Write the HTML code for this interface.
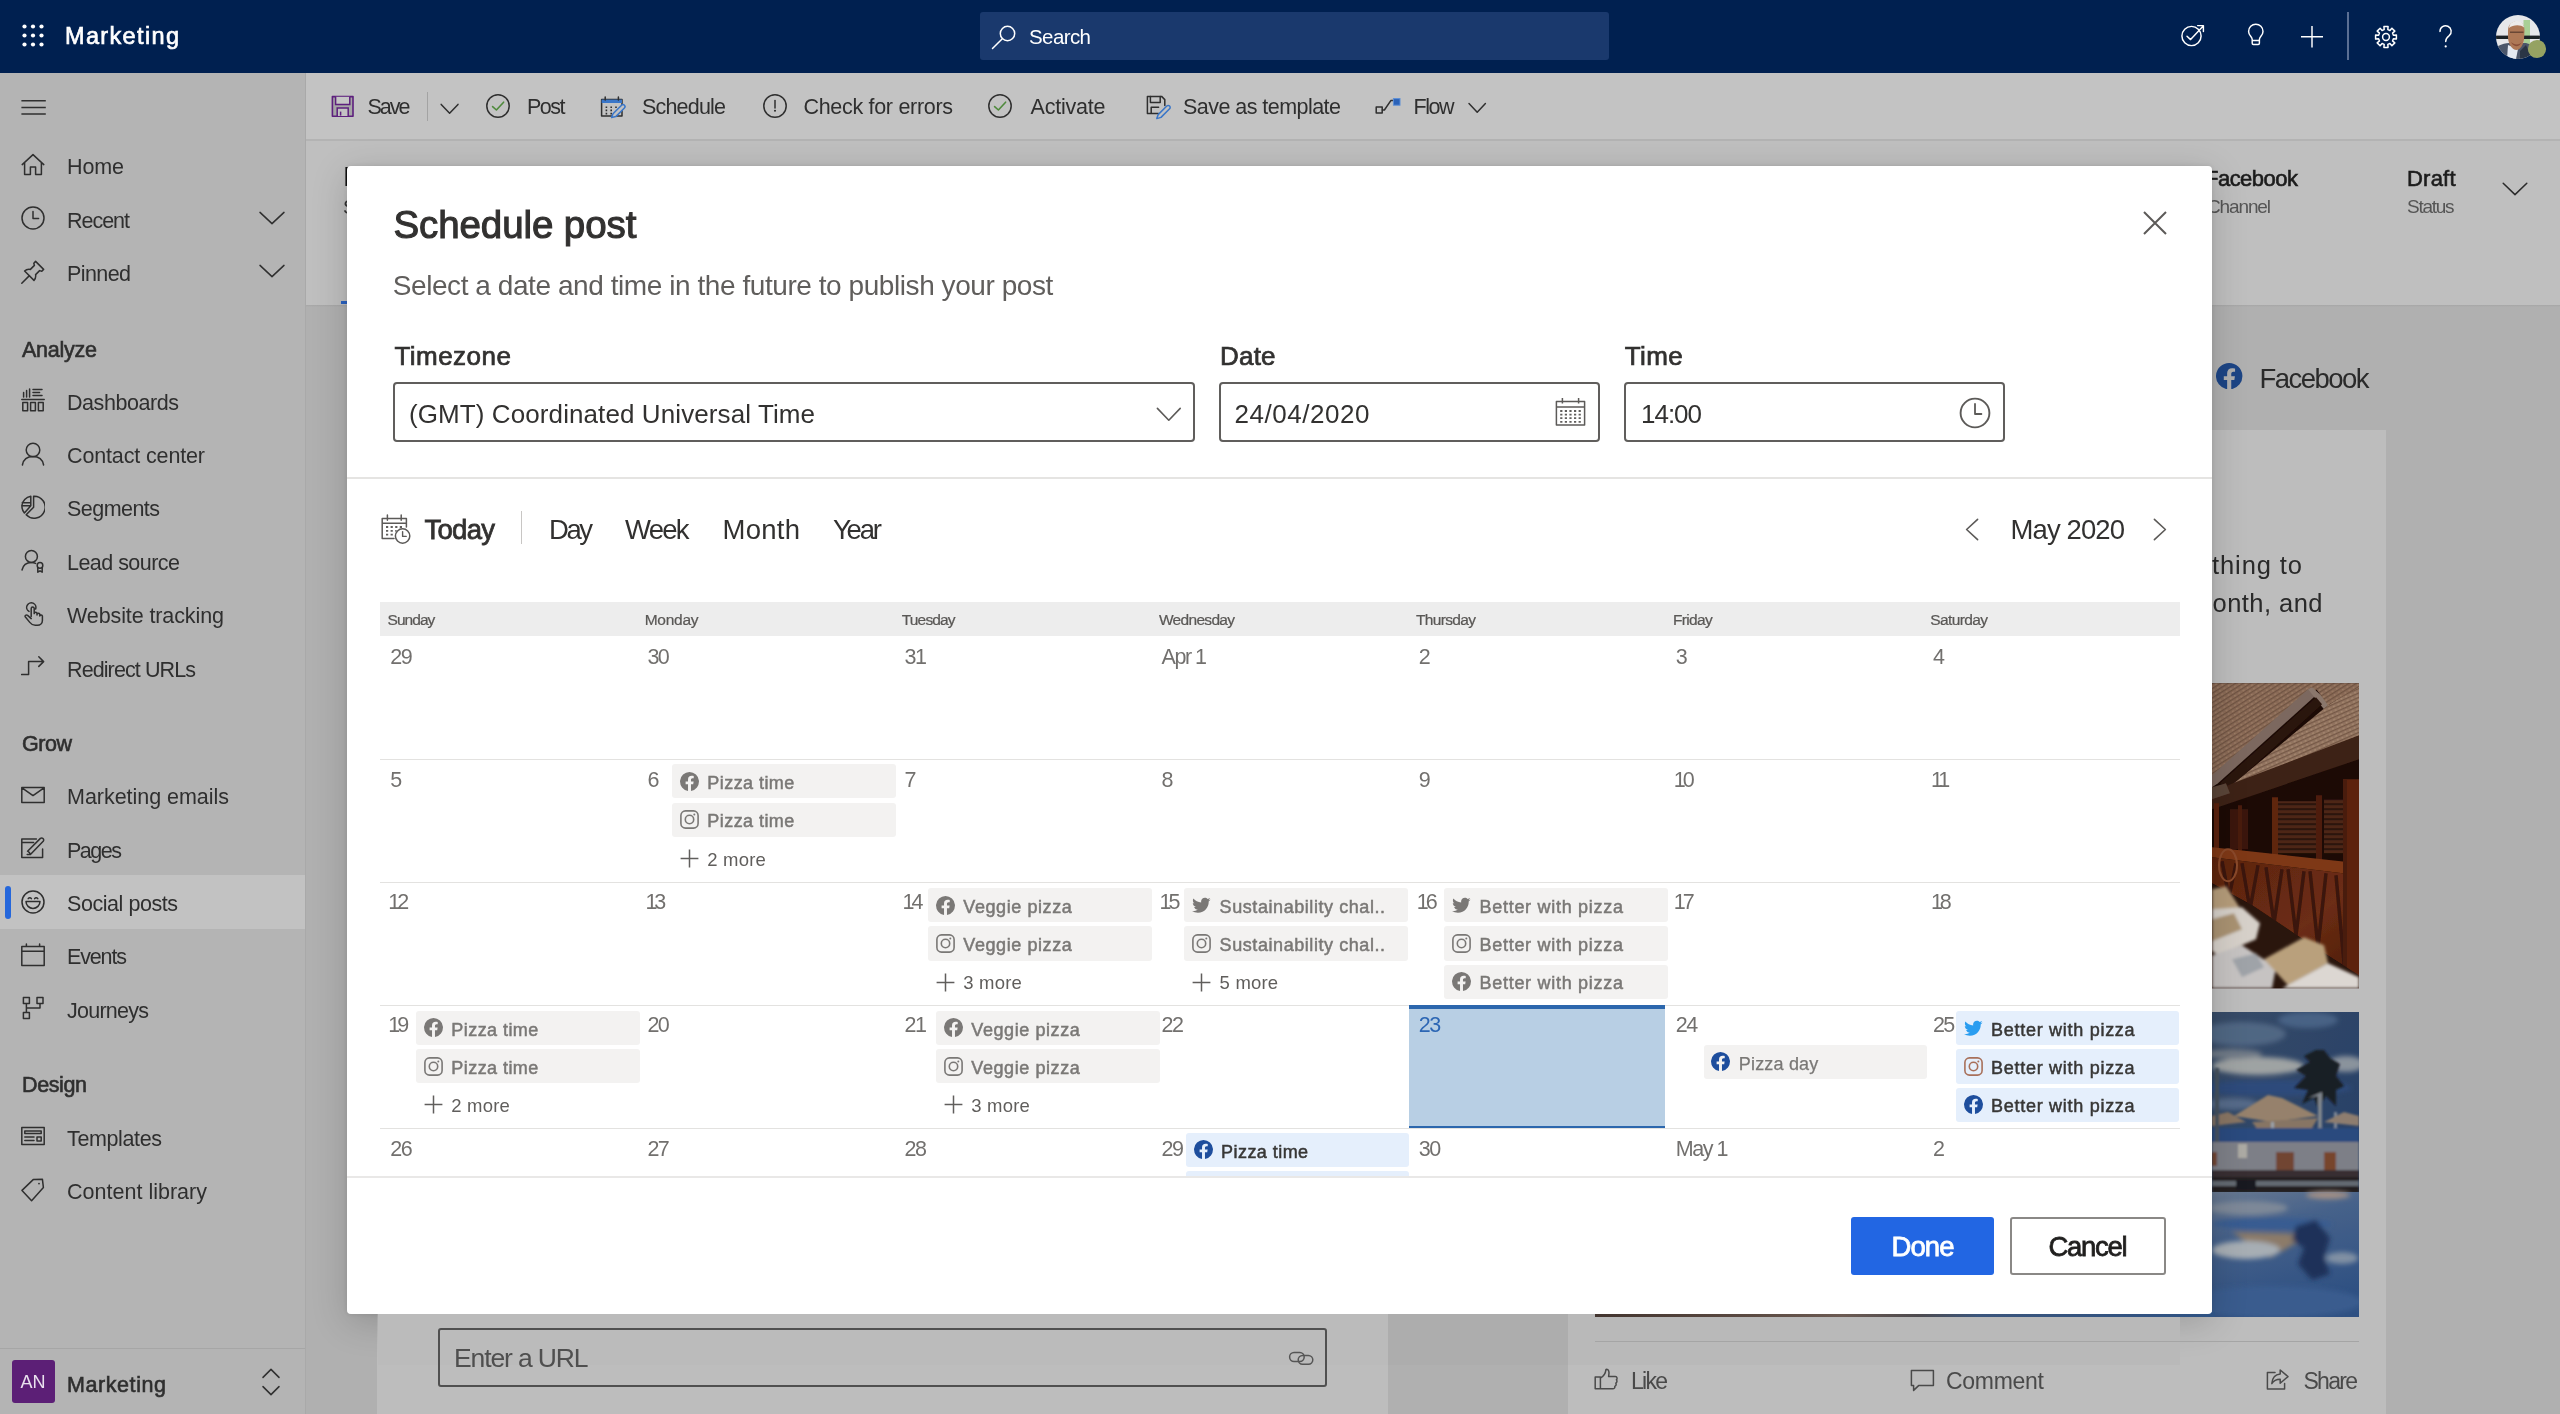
<!DOCTYPE html>
<html lang="en"><head><meta charset="utf-8"><title>Schedule post - Marketing</title>
<style>
html,body{margin:0;padding:0;}
body{width:2560px;height:1414px;overflow:hidden;position:relative;background:#b1b1b1;font-family:"Liberation Sans",sans-serif;}
#app{position:absolute;left:0;top:0;width:2560px;height:1414px;will-change:transform;}
.r{position:absolute;display:block;}
.t{position:absolute;white-space:nowrap;}
</style></head><body>
<div id="app">
<div class="r" style="left:0px;top:0px;width:2560px;height:73px;background:#002050;"></div>
<div class="r" style="left:0px;top:73px;width:305px;height:1341px;background:#b4b4b4;"></div>
<div class="r" style="left:305px;top:73px;width:1px;height:1341px;background:#a9a9a9;"></div>
<div class="r" style="left:306px;top:73px;width:2254px;height:66px;background:#c3c3c3;"></div>
<div class="r" style="left:306px;top:139px;width:2254px;height:2px;background:#b3b3b3;"></div>
<div class="r" style="left:306px;top:141px;width:2254px;height:164px;background:#bfbfbf;"></div>
<div class="r" style="left:306px;top:305px;width:2254px;height:1109px;background:#b0b0b0;"></div>
<div class="r" style="left:377px;top:305px;width:1011px;height:1109px;background:#bdbdbd;"></div>
<div class="r" style="left:1568px;top:430px;width:818px;height:984px;background:#bdbdbd;"></div>
<div class="r" style="left:0px;top:1348px;width:305px;height:1px;background:#a6a6a6;"></div>
<svg class="r" style="left:21.5px;top:23.5px;" width="22" height="24" viewBox="0 0 22 24" fill="none"><circle cx="2.5" cy="2.5" r="2.1" fill="#fff"/><circle cx="2.5" cy="11.5" r="2.1" fill="#fff"/><circle cx="2.5" cy="20.5" r="2.1" fill="#fff"/><circle cx="11" cy="2.5" r="2.1" fill="#fff"/><circle cx="11" cy="11.5" r="2.1" fill="#fff"/><circle cx="11" cy="20.5" r="2.1" fill="#fff"/><circle cx="19.5" cy="2.5" r="2.1" fill="#fff"/><circle cx="19.5" cy="11.5" r="2.1" fill="#fff"/><circle cx="19.5" cy="20.5" r="2.1" fill="#fff"/></svg>
<div class="t" style="left:65.00px;top:20px;font-size:23.5px;line-height:32px;-webkit-text-stroke:0.66px #fff;letter-spacing:1.351px;color:#fff;">Marketing</div>
<div class="r" style="left:980px;top:12px;width:629px;height:48px;background:#1a396d;border-radius:3px;"></div>
<svg class="r" style="left:990px;top:22px;" width="30" height="30" viewBox="0 0 30 30" fill="none"><circle cx="17.5" cy="11.5" r="7.2" stroke="#fff" stroke-width="1.5"/><path d="M12.3 16.7 L2.5 26.5" stroke="#fff" stroke-width="1.5" stroke-linecap="round"/></svg>
<div class="t" style="left:1029.00px;top:22px;font-size:20.5px;line-height:29px;letter-spacing:-0.589px;color:#fff;">Search</div>
<svg class="r" style="left:2180px;top:22px;" width="26" height="26" viewBox="0 0 26 26" fill="none"><circle cx="11.5" cy="14" r="9.6" stroke="#fff" stroke-width="1.45"/><path d="M7 14.2 L10.6 17.6 L23 4.2 M17.6 3.6 H23.4 V9.4" stroke="#fff" stroke-width="1.45" stroke-linecap="round" stroke-linejoin="round"/></svg>
<svg class="r" style="left:2245px;top:23px;" width="22" height="24" viewBox="0 0 22 24" fill="none"><path d="M7.2 16.4 C7.2 13.8 3.6 12.4 3.6 8.4 A7.2 7.2 0 0 1 18 8.4 C18 12.4 14.4 13.8 14.4 16.4 V20.2 A1.2 1.2 0 0 1 13.2 21.4 H8.4 A1.2 1.2 0 0 1 7.2 20.2 Z M7.2 17.4 H14.4" stroke="#fff" stroke-width="1.45" stroke-linejoin="round"/></svg>
<svg class="r" style="left:2300px;top:25px;" width="24" height="24" viewBox="0 0 24 24" fill="none"><path d="M12 1 V22.5 M1 11.7 H23" stroke="#fff" stroke-width="1.45"/></svg>
<div class="r" style="left:2347px;top:12px;width:1.5px;height:48px;background:#5a6f94;"></div>
<svg class="r" style="left:2374px;top:24.5px;" width="24" height="24" viewBox="0 0 24 24" fill="none"><path d="M9.93 1.60 L14.07 1.60 L13.83 4.62 L15.92 5.49 L17.89 3.19 L20.81 6.11 L18.51 8.08 L19.38 10.17 L22.40 9.93 L22.40 14.07 L19.38 13.83 L18.51 15.92 L20.81 17.89 L17.89 20.81 L15.92 18.51 L13.83 19.38 L14.07 22.40 L9.93 22.40 L10.17 19.38 L8.08 18.51 L6.11 20.81 L3.19 17.89 L5.49 15.92 L4.62 13.83 L1.60 14.07 L1.60 9.93 L4.62 10.17 L5.49 8.08 L3.19 6.11 L6.11 3.19 L8.08 5.49 L10.17 4.62 Z" stroke="#fff" stroke-width="1.5" stroke-linejoin="round"/><circle cx="12" cy="12" r="3.4" stroke="#fff" stroke-width="1.5"/></svg>
<svg class="r" style="left:2437px;top:24px;" width="18" height="26" viewBox="0 0 18 26" fill="none"><path d="M3 7.4 A5.6 5.6 0 1 1 12.2 11.6 C10.2 13.2 8.7 14.2 8.7 17.6" stroke="#fff" stroke-width="1.45" stroke-linecap="round"/><circle cx="8.7" cy="22.4" r="1.1" fill="#fff"/></svg>
<svg class="r" style="left:2496.3px;top:15.4px;" width="44" height="44" viewBox="0 0 44 44" fill="none"><defs><clipPath id="avc"><circle cx="22" cy="22" r="22"/></clipPath><filter id="avb" x="-10%" y="-10%" width="120%" height="120%"><feGaussianBlur stdDeviation="0.7"/></filter></defs>
<g clip-path="url(#avc)"><rect width="44" height="44" fill="#e6e7ea"/>
<g filter="url(#avb)">
<rect x="27.5" y="5" width="6.5" height="32" fill="#a9cf96"/>
<rect x="0" y="20.6" width="44" height="3.4" fill="#1d2026"/>
<path d="M0 44 L2 31 C6 29 10 28 13 28 L30 28 C34 29 38 31 40 34 L44 44 Z" fill="#4c566a"/>
<path d="M11 44 L12 30 L22 34 L20 44 Z" fill="#e4e9f1"/>
<path d="M24 36 L30 30 L36 44 L24 44 Z" fill="#2c3444"/>
<path d="M12 16 C12 9 16 6.5 21 6.5 C26 6.5 28.5 10 28.5 16 L28 24 C27.5 30 24 35 20.5 35 C16 35 12.5 29 12 23 Z" fill="#ae7857"/>
<path d="M13 13 C13.5 8 17 6 21 6 C25 6 27.5 8.5 28 12.5 C25 9.5 17 9.5 13 13 Z" fill="#ecebea"/>
<path d="M15 27 C17 32 23 33 26 27 C24 30 18 30.5 15 27 Z" fill="#8a4f38"/>
<path d="M14 17.2 H27.5" stroke="#5a3a2c" stroke-width="1.2"/>
</g></g></svg>
<svg class="r" style="left:2527.4px;top:38.8px;" width="20" height="20" viewBox="0 0 20 20" fill="none"><circle cx="10" cy="10" r="9.1" fill="#95a262"/></svg>
<svg class="r" style="left:21px;top:97px;" width="26" height="20" viewBox="0 0 26 20" fill="none"><path d="M0.4 3.75 H24.8 M0.4 10.45 H24.8 M0.4 17.1 H24.8" stroke="#2f2f2f" stroke-width="1.5"/></svg>
<div class="r" style="left:0px;top:875px;width:305px;height:54px;background:#c2c2c2;"></div>
<div class="r" style="left:4.5px;top:885.5px;width:6.5px;height:33px;background:#2567db;border-radius:3.5px;"></div>
<div class="t" style="left:67.00px;top:152px;font-size:21.5px;line-height:30px;letter-spacing:-0.121px;color:#2f2f2f;">Home</div>
<svg class="r" style="left:21px;top:152.9px;" width="24" height="24" viewBox="0 0 24 24" fill="none"><path d="M1.2 11.6 L12 1.6 L22.8 11.6 M3.6 9.6 V21.6 H9.4 V14 H14.6 V21.6 H20.4 V9.6" stroke="#2f2f2f" stroke-width="1.5" stroke-linecap="round" stroke-linejoin="round"/></svg>
<div class="t" style="left:67.00px;top:206px;font-size:21.5px;line-height:30px;letter-spacing:-1.022px;color:#2f2f2f;">Recent</div>
<svg class="r" style="left:21px;top:206.3px;" width="24" height="24" viewBox="0 0 24 24" fill="none"><circle cx="12" cy="12" r="11" stroke="#2f2f2f" stroke-width="1.5" stroke-linecap="round" stroke-linejoin="round"/><path d="M12 5.6 V12.6 H17.6" stroke="#2f2f2f" stroke-width="1.5" stroke-linecap="round" stroke-linejoin="round"/></svg>
<div class="t" style="left:67.00px;top:259px;font-size:21.5px;line-height:30px;letter-spacing:-0.590px;color:#2f2f2f;">Pinned</div>
<svg class="r" style="left:21px;top:259.7px;" width="24" height="24" viewBox="0 0 24 24" fill="none"><path d="M0.8 23.2 L8.4 15.6 M14.6 1.4 L22.6 9.4 L20.8 11.2 L18.6 10.6 L14.6 14.6 C15 17 14.4 19 13 20.4 L3.6 11 C5 9.6 7 9 9.4 9.4 L13.4 5.4 L12.8 3.2 Z" stroke="#2f2f2f" stroke-width="1.5" stroke-linecap="round" stroke-linejoin="round"/></svg>
<div class="t" style="left:67.00px;top:388px;font-size:21.5px;line-height:30px;letter-spacing:-0.436px;color:#2f2f2f;">Dashboards</div>
<svg class="r" style="left:21px;top:388.4px;" width="24" height="24" viewBox="0 0 24 24" fill="none"><path d="M2.6 9 V4.6 M5.6 9 V2.6 M8.6 9 V1 M12 1.6 H21 M12 4.6 H18.6 M12 7.6 H21 M0.8 11.4 H23.2 M1.8 14.4 H6.6 V22.8 H1.8 Z M9.6 14.4 H14.4 V22.8 H9.6 Z M17.4 14.4 H22.2 V22.8 H17.4 Z" stroke="#2f2f2f" stroke-width="1.5" stroke-linecap="round" stroke-linejoin="round"/></svg>
<div class="t" style="left:67.00px;top:441px;font-size:21.5px;line-height:30px;letter-spacing:-0.140px;color:#2f2f2f;">Contact center</div>
<svg class="r" style="left:21px;top:441.7px;" width="24" height="24" viewBox="0 0 24 24" fill="none"><circle cx="12" cy="8" r="6.8" stroke="#2f2f2f" stroke-width="1.5" stroke-linecap="round" stroke-linejoin="round"/><path d="M1.4 23 C2.4 17.6 6.4 14.6 12 14.6 C17.6 14.6 21.6 17.6 22.6 23" stroke="#2f2f2f" stroke-width="1.5" stroke-linecap="round" stroke-linejoin="round"/></svg>
<div class="t" style="left:67.00px;top:494px;font-size:21.5px;line-height:30px;letter-spacing:-0.542px;color:#2f2f2f;">Segments</div>
<svg class="r" style="left:21px;top:495.2px;" width="24" height="24" viewBox="0 0 24 24" fill="none"><path d="M9.8 1.2 A11 11 0 0 0 0.8 10.8 H9.8 Z M0.9 10.8 A10.8 10.8 0 0 0 3.4 18 L9.8 10.8 M12.6 1.2 A11 11 0 1 1 5.2 19.8 L12.6 12.2 Z M1.2 7.8 H9.6" stroke="#2f2f2f" stroke-width="1.5" stroke-linecap="round" stroke-linejoin="round"/></svg>
<div class="t" style="left:67.00px;top:548px;font-size:21.5px;line-height:30px;letter-spacing:-0.534px;color:#2f2f2f;">Lead source</div>
<svg class="r" style="left:21px;top:548.7px;" width="24" height="24" viewBox="0 0 24 24" fill="none"><circle cx="10.4" cy="7.4" r="6" stroke="#2f2f2f" stroke-width="1.5" stroke-linecap="round" stroke-linejoin="round"/><path d="M1 21 C2 16.4 5.6 13.4 10.4 13.4 C12 13.4 13.4 13.8 14.6 14.4" stroke="#2f2f2f" stroke-width="1.5" stroke-linecap="round" stroke-linejoin="round"/><circle cx="19" cy="16.4" r="2.8" stroke="#2f2f2f" stroke-width="1.5" stroke-linecap="round" stroke-linejoin="round"/><path d="M16.8 18.6 V23.2 L19 21.8 L21.2 23.2 V18.6" stroke="#2f2f2f" stroke-width="1.5" stroke-linecap="round" stroke-linejoin="round"/></svg>
<div class="t" style="left:67.00px;top:601px;font-size:21.5px;line-height:30px;letter-spacing:-0.103px;color:#2f2f2f;">Website tracking</div>
<svg class="r" style="left:21px;top:602px;" width="24" height="24" viewBox="0 0 24 24" fill="none"><path d="M8 9.4 A4.6 4.6 0 1 1 14.6 7 M10.2 14.6 V6.6 A1.5 1.5 0 0 1 13.2 6.6 V11.4 M13.2 11.6 A1.4 1.4 0 0 1 16 11.8 V13 M16 12.6 A1.4 1.4 0 0 1 18.8 12.8 V14 M18.8 13.8 A1.4 1.4 0 0 1 21.4 14.2 V18.4 C21.4 21.2 19.2 23.2 16.4 23.2 H14.2 C11.8 23.2 10.2 22.2 8.8 20.4 L4.4 15 C3.4 13.6 5.2 12.2 6.6 13.4 L10.2 16.6" stroke="#2f2f2f" stroke-width="1.5" stroke-linecap="round" stroke-linejoin="round"/></svg>
<div class="t" style="left:67.00px;top:655px;font-size:21.5px;line-height:30px;letter-spacing:-0.899px;color:#2f2f2f;">Redirect URLs</div>
<svg class="r" style="left:21px;top:655.4px;" width="24" height="24" viewBox="0 0 24 24" fill="none"><path d="M0.6 19.6 H7.6 V6.6 H22.6 M17.8 1.8 L22.6 6.6 L17.8 11.4" stroke="#2f2f2f" stroke-width="1.5" stroke-linecap="round" stroke-linejoin="round"/></svg>
<div class="t" style="left:67.00px;top:782px;font-size:21.5px;line-height:30px;letter-spacing:-0.033px;color:#2f2f2f;">Marketing emails</div>
<svg class="r" style="left:21px;top:782.7px;" width="24" height="24" viewBox="0 0 24 24" fill="none"><path d="M0.8 4.4 H23.2 V19.6 H0.8 Z M1 4.8 L12 12.6 L23 4.8" stroke="#2f2f2f" stroke-width="1.5" stroke-linecap="round" stroke-linejoin="round"/></svg>
<div class="t" style="left:67.00px;top:836px;font-size:21.5px;line-height:30px;letter-spacing:-1.488px;color:#2f2f2f;">Pages</div>
<svg class="r" style="left:21px;top:836.2px;" width="24" height="24" viewBox="0 0 24 24" fill="none"><path d="M21.6 13 V21.6 H0.8 V3 H15.4 M0.8 6.6 H12.6 M6.2 18.4 H9.4 L22.2 5.2 A2 2 0 0 0 19.4 2.4 L6.6 15.2 C7.4 15.6 9 17 9.4 18.4" stroke="#2f2f2f" stroke-width="1.5" stroke-linecap="round" stroke-linejoin="round"/></svg>
<div class="t" style="left:67.00px;top:889px;font-size:21.5px;line-height:30px;letter-spacing:-0.448px;color:#2f2f2f;">Social posts</div>
<svg class="r" style="left:21px;top:889.7px;" width="24" height="24" viewBox="0 0 24 24" fill="none"><circle cx="12" cy="12" r="11" stroke="#2f2f2f" stroke-width="1.5" stroke-linecap="round" stroke-linejoin="round"/><path d="M5 11.4 H19 A7 7 0 0 1 5 11.4 Z M7.2 8.6 A2 2 0 0 1 10.4 8.6 M13.6 8.6 A2 2 0 0 1 16.8 8.6" stroke="#2f2f2f" stroke-width="1.5" stroke-linecap="round" stroke-linejoin="round"/></svg>
<div class="t" style="left:67.00px;top:942px;font-size:21.5px;line-height:30px;letter-spacing:-1.145px;color:#2f2f2f;">Events</div>
<svg class="r" style="left:21px;top:943px;" width="24" height="24" viewBox="0 0 24 24" fill="none"><path d="M0.8 3.6 H23.2 V22.4 H0.8 Z M0.8 8.2 H23.2 M5.4 1 V3.6 M18.6 1 V3.6" stroke="#2f2f2f" stroke-width="1.5" stroke-linecap="round" stroke-linejoin="round"/></svg>
<div class="t" style="left:67.00px;top:996px;font-size:21.5px;line-height:30px;letter-spacing:-0.750px;color:#2f2f2f;">Journeys</div>
<svg class="r" style="left:21px;top:996.4px;" width="24" height="24" viewBox="0 0 24 24" fill="none"><path d="M2.4 1.6 H8.4 V7.6 H2.4 Z M16 1.6 H22 V7.6 H16 Z M2.4 16.4 H8.4 V22.4 H2.4 Z M5.4 7.6 V16.4 M19 7.6 V12 H5.4" stroke="#2f2f2f" stroke-width="1.5" stroke-linecap="round" stroke-linejoin="round"/></svg>
<div class="t" style="left:67.00px;top:1124px;font-size:21.5px;line-height:30px;letter-spacing:-0.375px;color:#2f2f2f;">Templates</div>
<svg class="r" style="left:21px;top:1124.2px;" width="24" height="24" viewBox="0 0 24 24" fill="none"><path d="M0.8 3.6 H23.2 V20.4 H0.8 Z M3.8 7 H20.2 V9.6 H3.8 Z M3.8 13 H13 M3.8 16.6 H13 M16 13 H20.2 V17 H16 Z" stroke="#2f2f2f" stroke-width="1.5" stroke-linecap="round" stroke-linejoin="round"/></svg>
<div class="t" style="left:67.00px;top:1177px;font-size:21.5px;line-height:30px;letter-spacing:0.013px;color:#2f2f2f;">Content library</div>
<svg class="r" style="left:21px;top:1177.7px;" width="24" height="24" viewBox="0 0 24 24" fill="none"><path d="M1 12.4 L12.2 1.6 L21.4 1.2 L22.4 9.6 L10.6 22.8 Z" stroke="#2f2f2f" stroke-width="1.5" stroke-linecap="round" stroke-linejoin="round"/><circle cx="18" cy="5.6" r="0.9" fill="#2f2f2f"/></svg>
<div class="t" style="left:22.00px;top:335px;font-size:21.5px;line-height:30px;-webkit-text-stroke:0.60px #2f2f2f;letter-spacing:-0.249px;color:#2f2f2f;">Analyze</div>
<div class="t" style="left:22.00px;top:729px;font-size:21.5px;line-height:30px;-webkit-text-stroke:0.60px #2f2f2f;letter-spacing:-0.476px;color:#2f2f2f;">Grow</div>
<div class="t" style="left:22.00px;top:1070px;font-size:21.5px;line-height:30px;-webkit-text-stroke:0.60px #2f2f2f;letter-spacing:-0.386px;color:#2f2f2f;">Design</div>
<svg class="r" style="left:258px;top:209.5px;" width="28" height="16" viewBox="0 0 28 16" fill="none"><path d="M2 2.4 L14 13.6 L26 2.4" stroke="#2f2f2f" stroke-width="1.5" stroke-linecap="round" stroke-linejoin="round"/></svg>
<svg class="r" style="left:258px;top:262.5px;" width="28" height="16" viewBox="0 0 28 16" fill="none"><path d="M2 2.4 L14 13.6 L26 2.4" stroke="#2f2f2f" stroke-width="1.5" stroke-linecap="round" stroke-linejoin="round"/></svg>
<div class="r" style="left:12px;top:1360px;width:43px;height:43px;background:#5c1f76;border-radius:3px;"></div>
<div class="t" style="left:20.50px;top:1369px;font-size:18px;line-height:26px;letter-spacing:-0.002px;color:#e9e1ee;">AN</div>
<div class="t" style="left:67.00px;top:1370px;font-size:21.5px;line-height:30px;-webkit-text-stroke:0.60px #2f2f2f;letter-spacing:0.574px;color:#2f2f2f;">Marketing</div>
<svg class="r" style="left:260px;top:1366px;" width="22" height="32" viewBox="0 0 22 32" fill="none"><path d="M3 11.4 L11 3.4 L19 11.4 M3 20.6 L11 28.6 L19 20.6" stroke="#2f2f2f" stroke-width="1.5" stroke-linecap="round" stroke-linejoin="round"/></svg>
<svg class="r" style="left:331px;top:95px;" width="24" height="23" viewBox="0 0 24 23" fill="none"><path d="M1.4 1.6 H22 V21.2 H1.4 Z" fill="#a6a6a6" stroke="#5d1f7d" stroke-width="1.6" stroke-linejoin="round"/><path d="M4.6 1.8 V9.6 H18.8 V1.8" fill="#c6c6c6" stroke="#5d1f7d" stroke-width="1.5"/><path d="M6.2 21 V13 H17.2 V21" fill="#c3c3c3" stroke="#5d1f7d" stroke-width="1.5"/><path d="M9.6 20.6 V16.6" stroke="#5d1f7d" stroke-width="1.5"/></svg>
<div class="t" style="left:367.50px;top:92px;font-size:21.5px;line-height:30px;letter-spacing:-2.000px;color:#2f2f2f;">Save</div>
<div class="r" style="left:427px;top:92px;width:1.3px;height:29px;background:#a3a3a3;"></div>
<svg class="r" style="left:439px;top:101.5px;" width="22" height="14" viewBox="0 0 22 14" fill="none"><path d="M2.2 2.4 L10.6 11.2 L19 2.4" stroke="#2f2f2f" stroke-width="1.5" stroke-linecap="round" stroke-linejoin="round"/></svg>
<svg class="r" style="left:484.7px;top:93.2px;" width="26" height="26" viewBox="0 0 26 26" fill="none"><circle cx="13" cy="13" r="11.2" stroke="#2f2f2f" stroke-width="1.5" stroke-linecap="round" stroke-linejoin="round"/><path d="M7.6 13.6 L11.4 17 L18.6 9.2" stroke="#4f8a3c" stroke-width="1.6" stroke-linecap="round" stroke-linejoin="round"/></svg>
<div class="t" style="left:527.00px;top:92px;font-size:21.5px;line-height:30px;letter-spacing:-1.507px;color:#2f2f2f;">Post</div>
<svg class="r" style="left:600px;top:95px;" width="26" height="24" viewBox="0 0 26 24" fill="none"><path d="M1.6 4.6 H22 V21 H1.6 Z" stroke="#2f2f2f" stroke-width="1.5" stroke-linecap="round" stroke-linejoin="round"/><rect x="1.6" y="4.6" width="20.4" height="3.4" fill="#3a76c8"/><path d="M5.2 2 V5 M18.4 2 V5" stroke="#2f2f2f" stroke-width="1.5" stroke-linecap="round" stroke-linejoin="round"/><path d="M5.6 12.2 h1.6 M10.4 12.2 h1.6 M15.2 12.2 h1.6 M5.6 15.4 h1.6 M10.4 15.4 h1.6 M5.6 18.6 h1.6 M10.4 18.6 h1.6" stroke="#2f2f2f" stroke-width="1.6"/><path d="M11.6 22.6 L13 18.8 L21.6 10.2 A1.9 1.9 0 0 1 24.4 13 L15.8 21.6 Z" fill="#c3c3c3" stroke="#3a76c8" stroke-width="1.5" stroke-linejoin="round"/></svg>
<div class="t" style="left:642.00px;top:92px;font-size:21.5px;line-height:30px;letter-spacing:-0.808px;color:#2f2f2f;">Schedule</div>
<svg class="r" style="left:762px;top:93.2px;" width="26" height="26" viewBox="0 0 26 26" fill="none"><circle cx="13" cy="13" r="11.2" stroke="#2f2f2f" stroke-width="1.5" stroke-linecap="round" stroke-linejoin="round"/><path d="M13 7.4 V15" stroke="#2f2f2f" stroke-width="1.5" stroke-linecap="round" stroke-linejoin="round"/><circle cx="13" cy="17.8" r="1.05" fill="#2f2f2f"/></svg>
<div class="t" style="left:803.50px;top:92px;font-size:21.5px;line-height:30px;letter-spacing:-0.309px;color:#2f2f2f;">Check for errors</div>
<svg class="r" style="left:986.6px;top:93.2px;" width="26" height="26" viewBox="0 0 26 26" fill="none"><circle cx="13" cy="13" r="11.2" stroke="#2f2f2f" stroke-width="1.5" stroke-linecap="round" stroke-linejoin="round"/><path d="M7.6 13.6 L11.4 17 L18.6 9.2" stroke="#4f8a3c" stroke-width="1.6" stroke-linecap="round" stroke-linejoin="round"/></svg>
<div class="t" style="left:1030.50px;top:92px;font-size:21.5px;line-height:30px;letter-spacing:-0.211px;color:#2f2f2f;">Activate</div>
<svg class="r" style="left:1146px;top:95px;" width="26" height="25" viewBox="0 0 26 25" fill="none"><path d="M12.4 18.4 H1.4 V1.4 H15.6 L18.8 4.6 V10.6" stroke="#2f2f2f" stroke-width="1.5" stroke-linecap="round" stroke-linejoin="round"/><path d="M4.4 1.6 V7.4 H14.2 V1.6 M5.2 18.2 V12.2 H12.6" stroke="#2f2f2f" stroke-width="1.5" stroke-linecap="round" stroke-linejoin="round"/><path d="M10.8 23.6 L12.2 19.6 L20.8 11 A1.9 1.9 0 0 1 23.6 13.8 L15 22.4 Z" fill="#c3c3c3" stroke="#3a76c8" stroke-width="1.5" stroke-linejoin="round"/></svg>
<div class="t" style="left:1183.00px;top:92px;font-size:21.5px;line-height:30px;letter-spacing:-0.542px;color:#2f2f2f;">Save as template</div>
<svg class="r" style="left:1375px;top:98px;" width="27" height="17" viewBox="0 0 27 17" fill="none"><rect x="1.2" y="9" width="6" height="6" stroke="#2f2f2f" stroke-width="1.5" stroke-linecap="round" stroke-linejoin="round"/><path d="M7.4 12 H9.4 L15.8 2.6 H18" stroke="#2f2f2f" stroke-width="1.5" stroke-linecap="round" stroke-linejoin="round"/><rect x="18.4" y="0.6" width="6.6" height="6.6" fill="#2b62b8" stroke="#5d8fd6" stroke-width="1"/></svg>
<div class="t" style="left:1413.50px;top:92px;font-size:21.5px;line-height:30px;letter-spacing:-1.484px;color:#2f2f2f;">Flow</div>
<svg class="r" style="left:1466.5px;top:100.5px;" width="21" height="14" viewBox="0 0 21 14" fill="none"><path d="M2 2.6 L10.2 11.2 L18.4 2.6" stroke="#2f2f2f" stroke-width="1.5" stroke-linecap="round" stroke-linejoin="round"/></svg>
<div class="r" style="left:306px;top:305px;width:2254px;height:2px;background:linear-gradient(#a6a6a6,#b0b0b0);"></div>
<div class="r" style="left:377px;top:307px;width:1011px;height:1107px;background:#bdbdbd;"></div>
<div class="t" style="left:343.40px;top:157px;font-size:28.5px;line-height:38px;font-weight:700;letter-spacing:-1.100px;color:#111;">New social post</div>
<div class="t" style="left:343.00px;top:193px;font-size:20px;line-height:28px;letter-spacing:-0.584px;color:#333;">Social post</div>
<div class="r" style="left:341px;top:301px;width:60px;height:3px;background:#2b62c0;"></div>
<div class="t" style="left:2205.00px;top:163px;font-size:22px;line-height:31px;-webkit-text-stroke:0.62px #1c1c1c;letter-spacing:-0.524px;color:#1c1c1c;">Facebook</div>
<div class="t" style="left:2207.00px;top:193px;font-size:19px;line-height:27px;letter-spacing:-1.129px;color:#555;">Channel</div>
<div class="t" style="left:2407.00px;top:163px;font-size:22px;line-height:31px;-webkit-text-stroke:0.62px #1c1c1c;letter-spacing:0.207px;color:#1c1c1c;">Draft</div>
<div class="t" style="left:2407.00px;top:193px;font-size:19px;line-height:27px;letter-spacing:-1.273px;color:#555;">Status</div>
<svg class="r" style="left:2500.5px;top:180.5px;" width="28" height="17" viewBox="0 0 28 17" fill="none"><path d="M2.2 2.2 L14 13.6 L25.8 2.2" stroke="#2a2a2a" stroke-width="1.5" stroke-linecap="round" stroke-linejoin="round"/></svg>
<svg class="r" style="left:2216.3px;top:362.6px;" width="26.4" height="26.4" viewBox="0 0 26.4 26.4" fill="none"><path d="M13.2 0 A13.2 13.2 0 0 0 11.14 26.24 V17.02 H7.79 V13.2 H11.14 V10.29 C11.14 6.98 13.11 5.16 16.13 5.16 C17.57 5.16 19.08 5.41 19.08 5.41 V8.66 H17.42 C15.78 8.66 15.26 9.68 15.26 10.72 V13.2 H18.92 L18.34 17.02 H15.26 V26.24 A13.2 13.2 0 0 0 13.2 0 Z" fill="#1d4585"/></svg>
<div class="t" style="left:2259.50px;top:360px;font-size:27.5px;line-height:37px;letter-spacing:-1.548px;color:#2a2a2a;">Facebook</div>
<div class="t" style="left:2212.00px;top:548px;font-size:25.5px;line-height:34px;letter-spacing:0.909px;color:#2a2a2a;">thing to</div>
<div class="t" style="left:2212.50px;top:586px;font-size:25.5px;line-height:34px;letter-spacing:0.458px;color:#2a2a2a;">onth, and</div>
<svg class="r" style="left:2212px;top:683px;overflow:hidden;" width="147" height="305.5" viewBox="0 0 147 305" fill="none"><defs>
<pattern id="ht" width="5" height="4" patternUnits="userSpaceOnUse" patternTransform="rotate(-32)"><rect width="5" height="4" fill="#8a6b57"/><rect width="5" height="1.3" fill="#6f5342"/><rect x="2" y="2.2" width="1.6" height="1.2" fill="#a08068"/></pattern>
<pattern id="ht2" width="5" height="4" patternUnits="userSpaceOnUse" patternTransform="rotate(-24)"><rect width="5" height="4" fill="#927460"/><rect width="5" height="1.2" fill="#745846"/><rect x="1" y="2.2" width="2" height="1.2" fill="#a88a72"/></pattern>
<pattern id="sl" width="8" height="5" patternUnits="userSpaceOnUse"><rect width="8" height="5" fill="#4e2616"/><rect width="8" height="2" fill="#2a120a"/></pattern>
<linearGradient id="hw" x1="0" y1="0" x2="1" y2="1"><stop offset="0" stop-color="#5c2410"/><stop offset="0.6" stop-color="#6c2d13"/><stop offset="1" stop-color="#4c1d0c"/></linearGradient>
<filter id="hb" x="-5%" y="-5%" width="110%" height="110%"><feGaussianBlur stdDeviation="0.7"/></filter>
<filter id="hb2" x="-10%" y="-10%" width="120%" height="120%"><feGaussianBlur stdDeviation="1.6"/></filter>
</defs>
<rect width="147" height="305" fill="#1c0a05"/>
<g filter="url(#hb)">
<polygon points="0,0 112,0 0,98" fill="url(#ht)"/>
<polygon points="0,92 96,6 104,12 6,100 0,104" fill="#7b685e"/>
<polygon points="96,6 100,4 118,20 112,26" fill="#8a776c"/>
<polygon points="8,100 104,14 110,21 18,104" fill="#2c150d"/>
<polygon points="10,110 116,22 147,2 147,54 16,112" fill="url(#ht2)"/>
<polygon points="100,0 147,0 147,4 116,22" fill="url(#ht)"/>
<polygon points="0,108 147,52 147,76 0,126" fill="#3d2115"/>
<polygon points="0,104 14,100 18,110 0,116" fill="#5a4438"/>
<rect x="62" y="118" width="44" height="52" fill="url(#sl)"/>
<rect x="112" y="116" width="22" height="54" fill="url(#sl)"/>
<rect x="18" y="126" width="18" height="40" fill="#3a170c"/>
<rect x="60" y="114" width="6" height="62" fill="#5e2510"/>
<rect x="104" y="112" width="6" height="66" fill="#4e1e0c"/>
<rect x="2" y="120" width="5" height="52" fill="#5a2410"/>
<rect x="26" y="122" width="4" height="50" fill="#4a1c0b"/>
<polygon points="0,164 147,180 147,192 0,174" fill="#7e3818"/>
<polygon points="0,174 147,192 147,292 100,262 40,222 0,200" fill="url(#hw)"/>
<path d="M10 178 L17 214 L24 180 M30 180 L38 226 L46 182 M54 184 L62 240 L70 186 M76 186 L84 252 L92 188 M98 188 L106 264 L114 190 M124 192 L132 280 L140 194" stroke="#3a1408" stroke-width="3.4" fill="none" stroke-linejoin="round"/>
<rect x="131" y="96" width="16" height="196" fill="#5c2410"/>
<rect x="131" y="96" width="4" height="196" fill="#4a1a09"/>
<polygon points="0,200 40,222 100,262 147,292 147,305 0,305" fill="#2a140c"/>
<ellipse cx="16" cy="182" rx="9" ry="16" fill="none" stroke="#8a4a2a" stroke-width="2"/>
</g>
<g filter="url(#hb2)">
<polygon points="0,206 14,203 30,228 0,240" fill="#b59c7a"/>
<polygon points="0,226 30,224 48,240 44,256 6,272 0,268" fill="#d6d0c9"/>
<polygon points="0,236 22,230 30,246 0,258" fill="#a99272"/>
<polygon points="0,272 30,262 64,284 60,305 0,305" fill="#c6c3c2"/>
<polygon points="20,276 44,270 52,284 30,294" fill="#9fa3a8"/>
<polygon points="52,276 92,254 112,262 116,280 76,302" fill="#b9a07c"/>
<polygon points="70,305 116,280 147,294 147,305" fill="#dcd7d2"/>
</g>
</svg>
<svg class="r" style="left:2212px;top:1012px;overflow:hidden;" width="147" height="305" viewBox="0 0 147 305" fill="none"><defs>
<linearGradient id="ps" x1="0" y1="0" x2="1" y2="1"><stop offset="0" stop-color="#3a506f"/><stop offset="0.6" stop-color="#2b4670"/><stop offset="1" stop-color="#1d3b6b"/></linearGradient>
<linearGradient id="pw" x1="0" y1="0" x2="0.3" y2="1"><stop offset="0" stop-color="#73859f"/><stop offset="0.35" stop-color="#4b6a98"/><stop offset="1" stop-color="#30568f"/></linearGradient>
<filter id="pb" x="-15%" y="-15%" width="130%" height="130%"><feGaussianBlur stdDeviation="2.6"/></filter>
<filter id="pb2" x="-10%" y="-10%" width="120%" height="120%"><feGaussianBlur stdDeviation="1.2"/></filter>
</defs>
<rect width="147" height="305" fill="url(#ps)"/>
<g filter="url(#pb)">
<ellipse cx="30" cy="22" rx="44" ry="12" fill="#566f90"/>
<ellipse cx="96" cy="8" rx="30" ry="8" fill="#4d6a92"/>
<ellipse cx="46" cy="54" rx="46" ry="9" fill="#b2b6b5"/>
<ellipse cx="134" cy="52" rx="18" ry="8" fill="#9aa3ad"/>
<ellipse cx="20" cy="42" rx="30" ry="5" fill="#7d8794"/>
<ellipse cx="60" cy="76" rx="80" ry="8" fill="#2d4f86"/>
<ellipse cx="20" cy="92" rx="26" ry="6" fill="#5d7597"/>
</g>
<g filter="url(#pb2)">
<path d="M104 38 L92 44 L98 50 L84 58 L94 64 L82 76 L96 78 L90 92 L102 86 L106 96 L114 84 L124 94 L124 78 L132 74 L124 64 L128 52 L118 46 L112 38 Z" fill="#161b24"/>
<path d="M96 86 L110 80 V130 H106 V84" fill="#8d939a"/>
<rect x="122" y="100" width="3" height="44" fill="#8f98a6"/>
<polygon points="22,104 56,83 70,86 106,104 60,110" fill="#a88f74"/>
<polygon points="40,110 106,106 100,116 46,118" fill="#97816c"/>
<polygon points="0,104 16,100 34,110 0,114" fill="#98806a"/>
<polygon points="112,110 132,100 147,104 147,114" fill="#9f8a78"/>
<rect x="59" y="110" width="3" height="50" fill="#aeb4bc"/>
<rect x="0" y="116" width="147" height="16" fill="#2b4f8a"/>
<rect x="3" y="56" width="4" height="90" fill="#4c5663"/>
<rect x="0" y="130" width="147" height="36" fill="#8b8c94"/>
<rect x="26" y="132" width="9" height="14" fill="#c2beb6"/>
<rect x="64" y="140" width="18" height="20" fill="#7d4a30"/><rect x="112" y="140" width="12" height="18" fill="#84482c"/><rect x="0" y="140" width="5" height="14" fill="#7d4a30"/>
<rect x="0" y="158" width="147" height="8" fill="#3a2e30"/>
<rect x="0" y="165" width="147" height="16" fill="#241d1f"/>
<rect x="0" y="169" width="147" height="5" fill="#6d737c"/>
<rect x="24" y="168" width="20" height="10" fill="#15161c"/>
</g>
<rect x="0" y="180" width="147" height="125" fill="url(#pw)"/>
<g filter="url(#pb)">
<ellipse cx="116" cy="183" rx="22" ry="4" fill="#b59f92"/>
<ellipse cx="36" cy="196" rx="40" ry="7" fill="#8b97a8"/>
<ellipse cx="60" cy="212" rx="60" ry="6" fill="#3b64a0"/>
<polygon points="20,220 100,222 58,246" fill="#9c8772"/>
<ellipse cx="34" cy="238" rx="34" ry="9" fill="#bcc3c9"/>
<ellipse cx="130" cy="246" rx="16" ry="6" fill="#8fa0b6"/>
<path d="M84 214 L104 208 L118 226 L112 246 L118 262 L100 268 L86 252 L92 236 L80 228 Z" fill="#1a315f"/>
<ellipse cx="60" cy="290" rx="90" ry="16" fill="#3d649c"/>
</g>
<rect width="147" height="305" fill="#28303c" opacity="0.14"/>
</svg>
<div class="r" style="left:347.2px;top:166px;width:1864.6px;height:1147.6px;border-radius:4px;box-shadow:0 8px 36px 0 rgba(0,0,0,0.18),0 0 4px rgba(0,0,0,0.10);"></div>
<div class="r" style="left:378px;top:1314px;width:1010px;height:51px;background:#bbbbbb;"></div>
<div class="r" style="left:1388px;top:1314px;width:180px;height:51px;background:#adadad;"></div>
<div class="r" style="left:1568px;top:1314px;width:612px;height:51px;background:#b9b9b9;"></div>
<div class="r" style="left:1595px;top:1312px;width:620px;height:5px;background:linear-gradient(90deg,#43352f 0%,#5b4a42 25%,#6b5a52 40%,#4d4a4e 52%,#3a557c 62%,#2e5283 100%);"></div>
<div class="r" style="left:1595px;top:1340.5px;width:764px;height:1.5px;background:#a5a5a5;"></div>
<svg class="r" style="left:1594px;top:1366.5px;" width="26" height="24" viewBox="0 0 26 24" fill="none"><path d="M1.2 10 H6.4 V21.8 H1.2 Z M6.4 11 C9.6 9.4 11.6 6 12 2.4 C14.6 2 15.8 4.6 14.6 9.6 H21.4 C23.2 9.6 23.6 11.8 22.4 12.8 C23.4 13.8 23 15.6 21.8 16.2 C22.6 17.4 22 18.8 20.8 19.4 C21.2 20.8 20.2 21.8 18.8 21.8 H6.4" stroke="#4a4a4a" stroke-width="1.5" stroke-linecap="round" stroke-linejoin="round"/></svg>
<div class="t" style="left:1631.00px;top:1365px;font-size:23px;line-height:32px;letter-spacing:-1.727px;color:#4a4a4a;">Like</div>
<svg class="r" style="left:1909.5px;top:1368.5px;" width="26" height="24" viewBox="0 0 26 24" fill="none"><path d="M1.4 1.4 H23.4 V16.6 H8.6 L3.6 21.4 V16.6 H1.4 Z" stroke="#4a4a4a" stroke-width="1.5" stroke-linecap="round" stroke-linejoin="round"/></svg>
<div class="t" style="left:1946.00px;top:1365px;font-size:23px;line-height:32px;letter-spacing:-0.284px;color:#4a4a4a;">Comment</div>
<svg class="r" style="left:2266px;top:1367.5px;" width="25" height="23" viewBox="0 0 25 23" fill="none"><path d="M14.2 2 L22 8.6 L14.2 15.2 V11.2 C10 11.2 7.6 12.6 5.8 15.6 C6.2 10.4 9.2 6.4 14.2 6 Z M9 4.6 H1.4 V21 H18.6 V15.6" stroke="#4a4a4a" stroke-width="1.5" stroke-linecap="round" stroke-linejoin="round"/></svg>
<div class="t" style="left:2303.50px;top:1365px;font-size:23px;line-height:32px;letter-spacing:-1.716px;color:#4a4a4a;">Share</div>
<div class="r" style="left:438px;top:1328px;width:889px;height:59px;background:transparent;box-sizing:border-box;border:2px solid #505050;border-radius:3px;"></div>
<div class="t" style="left:454.00px;top:1340px;font-size:26.5px;line-height:36px;letter-spacing:-1.130px;color:#4f4f4f;">Enter a URL</div>
<svg class="r" style="left:1288px;top:1348px;" width="27" height="20" viewBox="0 0 27 20" fill="none"><rect x="1.6" y="4.6" width="14.6" height="8.8" rx="4.4" stroke="#555" stroke-width="1.5"/><rect x="10.2" y="7.4" width="14.6" height="8.8" rx="4.4" stroke="#555" stroke-width="1.5"/></svg>
<div class="r" style="left:347.2px;top:166px;width:1864.6px;height:1147.6px;background:#fff;border-radius:4px;"></div>
<div class="t" style="left:393.40px;top:200px;font-size:38.5px;line-height:49px;-webkit-text-stroke:1.08px #323130;letter-spacing:-0.084px;color:#323130;">Schedule post</div>
<svg class="r" style="left:2140px;top:208px;" width="30" height="30" viewBox="0 0 30 30" fill="none"><path d="M4 4 L26 26 M26 4 L4 26" stroke="#5c5a58" stroke-width="2"/></svg>
<div class="t" style="left:392.80px;top:267px;font-size:28px;line-height:37px;letter-spacing:-0.435px;color:#605e5c;">Select a date and time in the future to publish your post</div>
<div class="t" style="left:394.40px;top:338px;font-size:26px;line-height:36px;-webkit-text-stroke:0.73px #323130;letter-spacing:0.471px;color:#323130;">Timezone</div>
<div class="r" style="left:393.4px;top:382px;width:801.8px;height:60px;background:#fff;box-sizing:border-box;border:2px solid #605e5c;border-radius:4px;"></div>
<div class="t" style="left:409.00px;top:396px;font-size:26px;line-height:36px;letter-spacing:0.093px;color:#323130;">(GMT) Coordinated Universal Time</div>
<div class="t" style="left:1220.00px;top:338px;font-size:26px;line-height:36px;-webkit-text-stroke:0.73px #323130;letter-spacing:0.196px;color:#323130;">Date</div>
<div class="r" style="left:1219px;top:382px;width:381.2px;height:60px;background:#fff;box-sizing:border-box;border:2px solid #605e5c;border-radius:4px;"></div>
<div class="t" style="left:1234.50px;top:396px;font-size:26px;line-height:36px;letter-spacing:0.541px;color:#323130;">24/04/2020</div>
<div class="t" style="left:1624.70px;top:338px;font-size:26px;line-height:36px;-webkit-text-stroke:0.73px #323130;letter-spacing:0.397px;color:#323130;">Time</div>
<div class="r" style="left:1623.7px;top:382px;width:381.5px;height:60px;background:#fff;box-sizing:border-box;border:2px solid #605e5c;border-radius:4px;"></div>
<div class="t" style="left:1641.00px;top:396px;font-size:26px;line-height:36px;letter-spacing:-1.013px;color:#323130;">14:00</div>
<svg class="r" style="left:1155px;top:405px;" width="28" height="18" viewBox="0 0 28 18" fill="none"><path d="M2.4 3.4 L13.8 15.2 L25.2 3.4" stroke="#5c5a58" stroke-width="1.6" stroke-linecap="round" stroke-linejoin="round"/></svg>
<svg class="r" style="left:1554.5px;top:397px;" width="31" height="30" viewBox="0 0 31 30" fill="none"><path d="M1.4 4.4 H29.6 V28 H1.4 Z M1.4 10 H29.6 M7.4 1 V6.6 M23.6 1 V6.6" stroke="#5c5a58" stroke-width="1.5" stroke-linejoin="round"/><path d="M5.2 14 h2.2 M9.8 14 h2.2 M14.4 14 h2.2 M19 14 h2.2 M23.6 14 h2.2 M5.2 17.6 h2.2 M9.8 17.6 h2.2 M14.4 17.6 h2.2 M19 17.6 h2.2 M23.6 17.6 h2.2 M5.2 21.2 h2.2 M9.8 21.2 h2.2 M14.4 21.2 h2.2 M19 21.2 h2.2 M23.6 21.2 h2.2 M5.2 24.8 h2.2 M9.8 24.8 h2.2 M14.4 24.8 h2.2 M19 24.8 h2.2 M23.6 24.8 h2.2 " stroke="#605e5c" stroke-width="1.8"/></svg>
<svg class="r" style="left:1959px;top:396.5px;" width="32" height="32" viewBox="0 0 32 32" fill="none"><circle cx="16" cy="16" r="14.4" stroke="#5c5a58" stroke-width="1.9"/><path d="M16 7 V17 H22.4" stroke="#5c5a58" stroke-width="1.8" stroke-linecap="round" stroke-linejoin="round"/></svg>
<div class="r" style="left:347.2px;top:476.5px;width:1864.6px;height:2px;background:#e5e4e2;"></div>
<svg class="r" style="left:381px;top:514px;" width="30" height="30.5" viewBox="0 0 30 30.5" fill="none"><path d="M1.2 4.4 H25.4 V13 M13 24.6 H1.2 V4.4 M1.2 9.2 H25.4 M6.4 1 V6.2 M20.2 1 V6.2" stroke="#5c5a58" stroke-width="1.5" stroke-linejoin="round" stroke-linecap="round"/><path d="M5 13 h2.2 M9.6 13 h2.2 M14.2 13 h2.2 M18.8 13 h2.2 M5 16.8 h2.2 M9.6 16.8 h2.2 M14.2 16.8 h1.4 M5 20.6 h2.2 M9.6 20.6 h2.2" stroke="#605e5c" stroke-width="1.8"/><circle cx="21.6" cy="22" r="7.2" fill="#fff" stroke="#5c5a58" stroke-width="1.5"/><path d="M21.6 17.6 V22.4 H25.2" stroke="#5c5a58" stroke-width="1.4" stroke-linecap="round" stroke-linejoin="round"/></svg>
<div class="t" style="left:424.50px;top:511px;font-size:27.5px;line-height:37px;-webkit-text-stroke:0.77px #323130;letter-spacing:-0.718px;color:#323130;">Today</div>
<div class="r" style="left:521.2px;top:511px;width:1.2px;height:33px;background:#c8c6c4;"></div>
<div class="t" style="left:549.00px;top:511px;font-size:27.5px;line-height:37px;letter-spacing:-2.448px;color:#323130;">Day</div>
<div class="t" style="left:625.00px;top:511px;font-size:27.5px;line-height:37px;letter-spacing:-1.783px;color:#323130;">Week</div>
<div class="t" style="left:722.50px;top:511px;font-size:27.5px;line-height:37px;letter-spacing:0.269px;color:#323130;">Month</div>
<div class="t" style="left:833.00px;top:511px;font-size:27.5px;line-height:37px;letter-spacing:-2.193px;color:#323130;">Year</div>
<div class="t" style="left:2010.50px;top:511px;font-size:27.5px;line-height:37px;letter-spacing:-0.897px;color:#323130;">May 2020</div>
<svg class="r" style="left:1962px;top:516px;" width="20" height="27" viewBox="0 0 20 27" fill="none"><path d="M15.6 3.4 L4.6 13.5 L15.6 23.6" stroke="#5c5a58" stroke-width="1.6" stroke-linecap="round" stroke-linejoin="round"/></svg>
<svg class="r" style="left:2150px;top:516px;" width="20" height="27" viewBox="0 0 20 27" fill="none"><path d="M4.4 3.4 L15.4 13.5 L4.4 23.6" stroke="#5c5a58" stroke-width="1.6" stroke-linecap="round" stroke-linejoin="round"/></svg>
<div class="r" style="left:380.3px;top:602px;width:1799.7px;height:33.5px;background:#ededed;"></div>
<div class="t" style="left:387.60px;top:608px;font-size:15.5px;line-height:23px;-webkit-text-stroke:0.22px #5a5856;letter-spacing:-0.974px;color:#5a5856;">Sunday</div>
<div class="t" style="left:644.70px;top:608px;font-size:15.5px;line-height:23px;-webkit-text-stroke:0.22px #5a5856;letter-spacing:-0.271px;color:#5a5856;">Monday</div>
<div class="t" style="left:901.80px;top:608px;font-size:15.5px;line-height:23px;-webkit-text-stroke:0.22px #5a5856;letter-spacing:-0.846px;color:#5a5856;">Tuesday</div>
<div class="t" style="left:1158.90px;top:608px;font-size:15.5px;line-height:23px;-webkit-text-stroke:0.22px #5a5856;letter-spacing:-0.681px;color:#5a5856;">Wednesday</div>
<div class="t" style="left:1416.00px;top:608px;font-size:15.5px;line-height:23px;-webkit-text-stroke:0.22px #5a5856;letter-spacing:-0.674px;color:#5a5856;">Thursday</div>
<div class="t" style="left:1673.10px;top:608px;font-size:15.5px;line-height:23px;-webkit-text-stroke:0.22px #5a5856;letter-spacing:-0.695px;color:#5a5856;">Friday</div>
<div class="t" style="left:1930.20px;top:608px;font-size:15.5px;line-height:23px;-webkit-text-stroke:0.22px #5a5856;letter-spacing:-0.597px;color:#5a5856;">Saturday</div>
<div class="r" style="left:380.3px;top:758.5px;width:1799.7px;height:1.5px;background:#e3e2e0;"></div>
<div class="r" style="left:380.3px;top:881.5px;width:1799.7px;height:1.5px;background:#e3e2e0;"></div>
<div class="r" style="left:380.3px;top:1004.5px;width:1799.7px;height:1.5px;background:#e3e2e0;"></div>
<div class="r" style="left:380.3px;top:1127.5px;width:1799.7px;height:1.5px;background:#e3e2e0;"></div>
<div class="r" style="left:347.2px;top:1176.4px;width:1864.6px;height:1.6px;background:#e9e8e7;"></div>
<div class="r" style="left:1408.8px;top:1005px;width:256.5px;height:123.3px;background:#b8cfe4;"></div>
<div class="r" style="left:1408.8px;top:1004.8px;width:256.5px;height:4px;background:#2c67ad;"></div>
<div class="r" style="left:1408.8px;top:1125.6px;width:256.5px;height:2.7px;background:#2c67ad;"></div>
<div class="t" style="left:390.30px;top:642px;font-size:21.5px;line-height:30px;color:#72706e;letter-spacing:-1.5px;">29</div>
<div class="t" style="left:647.40px;top:642px;font-size:21.5px;line-height:30px;color:#72706e;letter-spacing:-1.5px;">30</div>
<div class="t" style="left:904.50px;top:642px;font-size:21.5px;line-height:30px;color:#72706e;letter-spacing:-1.5px;">31</div>
<div class="t" style="left:1161.60px;top:642px;font-size:21.5px;line-height:30px;color:#72706e;letter-spacing:-1.5px;">Apr 1</div>
<div class="t" style="left:1418.70px;top:642px;font-size:21.5px;line-height:30px;color:#72706e;letter-spacing:-1.5px;">2</div>
<div class="t" style="left:1675.80px;top:642px;font-size:21.5px;line-height:30px;color:#72706e;letter-spacing:-1.5px;">3</div>
<div class="t" style="left:1932.90px;top:642px;font-size:21.5px;line-height:30px;color:#72706e;letter-spacing:-1.5px;">4</div>
<div class="t" style="left:390.30px;top:765px;font-size:21.5px;line-height:30px;color:#72706e;letter-spacing:-1.5px;">5</div>
<div class="t" style="left:647.40px;top:765px;font-size:21.5px;line-height:30px;color:#72706e;letter-spacing:-1.5px;">6</div>
<div class="t" style="left:904.50px;top:765px;font-size:21.5px;line-height:30px;color:#72706e;letter-spacing:-1.5px;">7</div>
<div class="t" style="left:1161.60px;top:765px;font-size:21.5px;line-height:30px;color:#72706e;letter-spacing:-1.5px;">8</div>
<div class="t" style="left:1418.70px;top:765px;font-size:21.5px;line-height:30px;color:#72706e;letter-spacing:-1.5px;">9</div>
<div class="t" style="left:1673.80px;top:765px;font-size:21.5px;line-height:30px;color:#72706e;letter-spacing:-3px;">10</div>
<div class="t" style="left:1930.90px;top:765px;font-size:21.5px;line-height:30px;color:#72706e;letter-spacing:-3px;">11</div>
<div class="t" style="left:388.30px;top:887px;font-size:21.5px;line-height:30px;color:#72706e;letter-spacing:-3px;">12</div>
<div class="t" style="left:645.40px;top:887px;font-size:21.5px;line-height:30px;color:#72706e;letter-spacing:-3px;">13</div>
<div class="t" style="left:902.50px;top:887px;font-size:21.5px;line-height:30px;color:#72706e;letter-spacing:-3px;">14</div>
<div class="t" style="left:1159.60px;top:887px;font-size:21.5px;line-height:30px;color:#72706e;letter-spacing:-3px;">15</div>
<div class="t" style="left:1416.70px;top:887px;font-size:21.5px;line-height:30px;color:#72706e;letter-spacing:-3px;">16</div>
<div class="t" style="left:1673.80px;top:887px;font-size:21.5px;line-height:30px;color:#72706e;letter-spacing:-3px;">17</div>
<div class="t" style="left:1930.90px;top:887px;font-size:21.5px;line-height:30px;color:#72706e;letter-spacing:-3px;">18</div>
<div class="t" style="left:388.30px;top:1010px;font-size:21.5px;line-height:30px;color:#72706e;letter-spacing:-3px;">19</div>
<div class="t" style="left:647.40px;top:1010px;font-size:21.5px;line-height:30px;color:#72706e;letter-spacing:-1.5px;">20</div>
<div class="t" style="left:904.50px;top:1010px;font-size:21.5px;line-height:30px;color:#72706e;letter-spacing:-1.5px;">21</div>
<div class="t" style="left:1161.60px;top:1010px;font-size:21.5px;line-height:30px;color:#72706e;letter-spacing:-1.5px;">22</div>
<div class="t" style="left:1418.70px;top:1010px;font-size:21.5px;line-height:30px;color:#2c66b4;letter-spacing:-1.5px;">23</div>
<div class="t" style="left:1675.80px;top:1010px;font-size:21.5px;line-height:30px;color:#72706e;letter-spacing:-1.5px;">24</div>
<div class="t" style="left:1932.90px;top:1010px;font-size:21.5px;line-height:30px;color:#72706e;letter-spacing:-1.5px;">25</div>
<div class="t" style="left:390.30px;top:1134px;font-size:21.5px;line-height:30px;color:#72706e;letter-spacing:-1.5px;">26</div>
<div class="t" style="left:647.40px;top:1134px;font-size:21.5px;line-height:30px;color:#72706e;letter-spacing:-1.5px;">27</div>
<div class="t" style="left:904.50px;top:1134px;font-size:21.5px;line-height:30px;color:#72706e;letter-spacing:-1.5px;">28</div>
<div class="t" style="left:1161.60px;top:1134px;font-size:21.5px;line-height:30px;color:#72706e;letter-spacing:-1.5px;">29</div>
<div class="t" style="left:1418.70px;top:1134px;font-size:21.5px;line-height:30px;color:#72706e;letter-spacing:-1.5px;">30</div>
<div class="t" style="left:1675.80px;top:1134px;font-size:21.5px;line-height:30px;color:#72706e;letter-spacing:-1.5px;">May 1</div>
<div class="t" style="left:1932.90px;top:1134px;font-size:21.5px;line-height:30px;color:#72706e;letter-spacing:-1.5px;">2</div>
<div class="r" style="left:672px;top:764.3px;width:223.6px;height:34.2px;background:#f3f2f1;border-radius:3px;"></div>
<svg class="r" style="left:679.8px;top:771.8px;" width="19" height="19" viewBox="0 0 19 19" fill="none"><path d="M9.5 0 A9.5 9.5 0 0 0 8.02 18.88 V12.25 H5.6 V9.5 H8.02 V7.4 C8.02 5.02 9.44 3.71 11.6 3.71 C12.64 3.71 13.73 3.9 13.73 3.9 V6.23 H12.53 C11.35 6.23 10.98 6.97 10.98 7.72 V9.5 H13.62 L13.2 12.25 H10.98 V18.88 A9.5 9.5 0 0 0 9.5 0 Z" fill="#7a7876"/></svg>
<div class="t" style="left:707.30px;top:770px;font-size:18px;line-height:26px;-webkit-text-stroke:0.50px #7a7876;letter-spacing:0.443px;color:#7a7876;">Pizza time</div>
<div class="r" style="left:672px;top:802.55px;width:223.6px;height:34.2px;background:#f3f2f1;border-radius:3px;"></div>
<svg class="r" style="left:679.8px;top:810.05px;" width="19" height="19" viewBox="0 0 19 19" fill="none"><rect x="0.9" y="0.9" width="17.2" height="17.2" rx="4.6" stroke="#7a7876" stroke-width="1.6"/><circle cx="9.5" cy="9.5" r="4.2" stroke="#7a7876" stroke-width="1.6"/><circle cx="14.3" cy="4.6" r="1" fill="#7a7876"/></svg>
<div class="t" style="left:707.30px;top:808px;font-size:18px;line-height:26px;-webkit-text-stroke:0.50px #7a7876;letter-spacing:0.443px;color:#7a7876;">Pizza time</div>
<svg class="r" style="left:679.8px;top:848.7px;" width="19" height="19" viewBox="0 0 19 19" fill="none"><path d="M9.5 0.6 V18.4 M0.6 9.5 H18.4" stroke="#605e5c" stroke-width="1.5"/></svg>
<div class="t" style="left:707.30px;top:846px;font-size:18.5px;line-height:27px;letter-spacing:0.186px;color:#605e5c;">2 more</div>
<div class="r" style="left:928px;top:888.1px;width:223.6px;height:34.2px;background:#f3f2f1;border-radius:3px;"></div>
<svg class="r" style="left:935.8px;top:895.6px;" width="19" height="19" viewBox="0 0 19 19" fill="none"><path d="M9.5 0 A9.5 9.5 0 0 0 8.02 18.88 V12.25 H5.6 V9.5 H8.02 V7.4 C8.02 5.02 9.44 3.71 11.6 3.71 C12.64 3.71 13.73 3.9 13.73 3.9 V6.23 H12.53 C11.35 6.23 10.98 6.97 10.98 7.72 V9.5 H13.62 L13.2 12.25 H10.98 V18.88 A9.5 9.5 0 0 0 9.5 0 Z" fill="#7a7876"/></svg>
<div class="t" style="left:963.30px;top:894px;font-size:18px;line-height:26px;-webkit-text-stroke:0.50px #7a7876;letter-spacing:0.582px;color:#7a7876;">Veggie pizza</div>
<div class="r" style="left:928px;top:926.35px;width:223.6px;height:34.2px;background:#f3f2f1;border-radius:3px;"></div>
<svg class="r" style="left:935.8px;top:933.85px;" width="19" height="19" viewBox="0 0 19 19" fill="none"><rect x="0.9" y="0.9" width="17.2" height="17.2" rx="4.6" stroke="#7a7876" stroke-width="1.6"/><circle cx="9.5" cy="9.5" r="4.2" stroke="#7a7876" stroke-width="1.6"/><circle cx="14.3" cy="4.6" r="1" fill="#7a7876"/></svg>
<div class="t" style="left:963.30px;top:932px;font-size:18px;line-height:26px;-webkit-text-stroke:0.50px #7a7876;letter-spacing:0.582px;color:#7a7876;">Veggie pizza</div>
<svg class="r" style="left:935.8px;top:972.5px;" width="19" height="19" viewBox="0 0 19 19" fill="none"><path d="M9.5 0.6 V18.4 M0.6 9.5 H18.4" stroke="#605e5c" stroke-width="1.5"/></svg>
<div class="t" style="left:963.30px;top:969px;font-size:18.5px;line-height:27px;letter-spacing:0.186px;color:#605e5c;">3 more</div>
<div class="r" style="left:1184.3px;top:888.1px;width:223.6px;height:34.2px;background:#f3f2f1;border-radius:3px;"></div>
<svg class="r" style="left:1192.1px;top:895.8px;" width="19" height="19" viewBox="0 0 19 19" fill="none"><path d="M18.6 3.6 C17.9 3.9 17.2 4.1 16.4 4.2 C17.2 3.7 17.8 3 18.1 2.1 C17.4 2.5 16.6 2.8 15.7 3 C15 2.3 14 1.8 12.9 1.8 C10.8 1.8 9.1 3.5 9.1 5.6 C9.1 5.9 9.1 6.2 9.2 6.5 C6 6.3 3.2 4.8 1.4 2.5 C1 3.1 0.9 3.7 0.9 4.4 C0.9 5.7 1.5 6.9 2.6 7.6 C1.9 7.6 1.3 7.4 0.8 7.1 C0.8 9 2.1 10.5 3.9 10.9 C3.5 11 3.2 11 2.8 11 C2.6 11 2.3 11 2.1 10.9 C2.6 12.4 4 13.5 5.7 13.6 C4.4 14.6 2.7 15.2 0.9 15.2 C0.6 15.2 0.3 15.2 0 15.1 C1.7 16.2 3.7 16.8 5.9 16.8 C12.9 16.8 16.7 11 16.7 6 C16.7 5.8 16.7 5.7 16.7 5.5 C17.4 5 18.1 4.3 18.6 3.6 Z" fill="#7a7876"/></svg>
<div class="t" style="left:1219.60px;top:894px;font-size:18px;line-height:26px;-webkit-text-stroke:0.50px #7a7876;letter-spacing:0.571px;color:#7a7876;">Sustainability chal..</div>
<div class="r" style="left:1184.3px;top:926.35px;width:223.6px;height:34.2px;background:#f3f2f1;border-radius:3px;"></div>
<svg class="r" style="left:1192.1px;top:933.85px;" width="19" height="19" viewBox="0 0 19 19" fill="none"><rect x="0.9" y="0.9" width="17.2" height="17.2" rx="4.6" stroke="#7a7876" stroke-width="1.6"/><circle cx="9.5" cy="9.5" r="4.2" stroke="#7a7876" stroke-width="1.6"/><circle cx="14.3" cy="4.6" r="1" fill="#7a7876"/></svg>
<div class="t" style="left:1219.60px;top:932px;font-size:18px;line-height:26px;-webkit-text-stroke:0.50px #7a7876;letter-spacing:0.571px;color:#7a7876;">Sustainability chal..</div>
<svg class="r" style="left:1192.1px;top:972.5px;" width="19" height="19" viewBox="0 0 19 19" fill="none"><path d="M9.5 0.6 V18.4 M0.6 9.5 H18.4" stroke="#605e5c" stroke-width="1.5"/></svg>
<div class="t" style="left:1219.60px;top:969px;font-size:18.5px;line-height:27px;letter-spacing:0.186px;color:#605e5c;">5 more</div>
<div class="r" style="left:1444.2px;top:888.1px;width:223.6px;height:34.2px;background:#f3f2f1;border-radius:3px;"></div>
<svg class="r" style="left:1452px;top:895.8px;" width="19" height="19" viewBox="0 0 19 19" fill="none"><path d="M18.6 3.6 C17.9 3.9 17.2 4.1 16.4 4.2 C17.2 3.7 17.8 3 18.1 2.1 C17.4 2.5 16.6 2.8 15.7 3 C15 2.3 14 1.8 12.9 1.8 C10.8 1.8 9.1 3.5 9.1 5.6 C9.1 5.9 9.1 6.2 9.2 6.5 C6 6.3 3.2 4.8 1.4 2.5 C1 3.1 0.9 3.7 0.9 4.4 C0.9 5.7 1.5 6.9 2.6 7.6 C1.9 7.6 1.3 7.4 0.8 7.1 C0.8 9 2.1 10.5 3.9 10.9 C3.5 11 3.2 11 2.8 11 C2.6 11 2.3 11 2.1 10.9 C2.6 12.4 4 13.5 5.7 13.6 C4.4 14.6 2.7 15.2 0.9 15.2 C0.6 15.2 0.3 15.2 0 15.1 C1.7 16.2 3.7 16.8 5.9 16.8 C12.9 16.8 16.7 11 16.7 6 C16.7 5.8 16.7 5.7 16.7 5.5 C17.4 5 18.1 4.3 18.6 3.6 Z" fill="#7a7876"/></svg>
<div class="t" style="left:1479.50px;top:894px;font-size:18px;line-height:26px;-webkit-text-stroke:0.50px #7a7876;letter-spacing:0.715px;color:#7a7876;">Better with pizza</div>
<div class="r" style="left:1444.2px;top:926.35px;width:223.6px;height:34.2px;background:#f3f2f1;border-radius:3px;"></div>
<svg class="r" style="left:1452px;top:933.85px;" width="19" height="19" viewBox="0 0 19 19" fill="none"><rect x="0.9" y="0.9" width="17.2" height="17.2" rx="4.6" stroke="#7a7876" stroke-width="1.6"/><circle cx="9.5" cy="9.5" r="4.2" stroke="#7a7876" stroke-width="1.6"/><circle cx="14.3" cy="4.6" r="1" fill="#7a7876"/></svg>
<div class="t" style="left:1479.50px;top:932px;font-size:18px;line-height:26px;-webkit-text-stroke:0.50px #7a7876;letter-spacing:0.715px;color:#7a7876;">Better with pizza</div>
<div class="r" style="left:1444.2px;top:964.6px;width:223.6px;height:34.2px;background:#f3f2f1;border-radius:3px;"></div>
<svg class="r" style="left:1452px;top:972.1px;" width="19" height="19" viewBox="0 0 19 19" fill="none"><path d="M9.5 0 A9.5 9.5 0 0 0 8.02 18.88 V12.25 H5.6 V9.5 H8.02 V7.4 C8.02 5.02 9.44 3.71 11.6 3.71 C12.64 3.71 13.73 3.9 13.73 3.9 V6.23 H12.53 C11.35 6.23 10.98 6.97 10.98 7.72 V9.5 H13.62 L13.2 12.25 H10.98 V18.88 A9.5 9.5 0 0 0 9.5 0 Z" fill="#7a7876"/></svg>
<div class="t" style="left:1479.50px;top:970px;font-size:18px;line-height:26px;-webkit-text-stroke:0.50px #7a7876;letter-spacing:0.715px;color:#7a7876;">Better with pizza</div>
<div class="r" style="left:416px;top:1010.8px;width:223.6px;height:34.2px;background:#f3f2f1;border-radius:3px;"></div>
<svg class="r" style="left:423.8px;top:1018.3px;" width="19" height="19" viewBox="0 0 19 19" fill="none"><path d="M9.5 0 A9.5 9.5 0 0 0 8.02 18.88 V12.25 H5.6 V9.5 H8.02 V7.4 C8.02 5.02 9.44 3.71 11.6 3.71 C12.64 3.71 13.73 3.9 13.73 3.9 V6.23 H12.53 C11.35 6.23 10.98 6.97 10.98 7.72 V9.5 H13.62 L13.2 12.25 H10.98 V18.88 A9.5 9.5 0 0 0 9.5 0 Z" fill="#7a7876"/></svg>
<div class="t" style="left:451.30px;top:1017px;font-size:18px;line-height:26px;-webkit-text-stroke:0.50px #7a7876;letter-spacing:0.443px;color:#7a7876;">Pizza time</div>
<div class="r" style="left:416px;top:1049.05px;width:223.6px;height:34.2px;background:#f3f2f1;border-radius:3px;"></div>
<svg class="r" style="left:423.8px;top:1056.55px;" width="19" height="19" viewBox="0 0 19 19" fill="none"><rect x="0.9" y="0.9" width="17.2" height="17.2" rx="4.6" stroke="#7a7876" stroke-width="1.6"/><circle cx="9.5" cy="9.5" r="4.2" stroke="#7a7876" stroke-width="1.6"/><circle cx="14.3" cy="4.6" r="1" fill="#7a7876"/></svg>
<div class="t" style="left:451.30px;top:1055px;font-size:18px;line-height:26px;-webkit-text-stroke:0.50px #7a7876;letter-spacing:0.443px;color:#7a7876;">Pizza time</div>
<svg class="r" style="left:423.8px;top:1095.2px;" width="19" height="19" viewBox="0 0 19 19" fill="none"><path d="M9.5 0.6 V18.4 M0.6 9.5 H18.4" stroke="#605e5c" stroke-width="1.5"/></svg>
<div class="t" style="left:451.30px;top:1092px;font-size:18.5px;line-height:27px;letter-spacing:0.186px;color:#605e5c;">2 more</div>
<div class="r" style="left:936px;top:1010.8px;width:223.6px;height:34.2px;background:#f3f2f1;border-radius:3px;"></div>
<svg class="r" style="left:943.8px;top:1018.3px;" width="19" height="19" viewBox="0 0 19 19" fill="none"><path d="M9.5 0 A9.5 9.5 0 0 0 8.02 18.88 V12.25 H5.6 V9.5 H8.02 V7.4 C8.02 5.02 9.44 3.71 11.6 3.71 C12.64 3.71 13.73 3.9 13.73 3.9 V6.23 H12.53 C11.35 6.23 10.98 6.97 10.98 7.72 V9.5 H13.62 L13.2 12.25 H10.98 V18.88 A9.5 9.5 0 0 0 9.5 0 Z" fill="#7a7876"/></svg>
<div class="t" style="left:971.30px;top:1017px;font-size:18px;line-height:26px;-webkit-text-stroke:0.50px #7a7876;letter-spacing:0.582px;color:#7a7876;">Veggie pizza</div>
<div class="r" style="left:936px;top:1049.05px;width:223.6px;height:34.2px;background:#f3f2f1;border-radius:3px;"></div>
<svg class="r" style="left:943.8px;top:1056.55px;" width="19" height="19" viewBox="0 0 19 19" fill="none"><rect x="0.9" y="0.9" width="17.2" height="17.2" rx="4.6" stroke="#7a7876" stroke-width="1.6"/><circle cx="9.5" cy="9.5" r="4.2" stroke="#7a7876" stroke-width="1.6"/><circle cx="14.3" cy="4.6" r="1" fill="#7a7876"/></svg>
<div class="t" style="left:971.30px;top:1055px;font-size:18px;line-height:26px;-webkit-text-stroke:0.50px #7a7876;letter-spacing:0.582px;color:#7a7876;">Veggie pizza</div>
<svg class="r" style="left:943.8px;top:1095.2px;" width="19" height="19" viewBox="0 0 19 19" fill="none"><path d="M9.5 0.6 V18.4 M0.6 9.5 H18.4" stroke="#605e5c" stroke-width="1.5"/></svg>
<div class="t" style="left:971.30px;top:1092px;font-size:18.5px;line-height:27px;letter-spacing:0.186px;color:#605e5c;">3 more</div>
<div class="r" style="left:1703.5px;top:1044.9px;width:223.6px;height:34.2px;background:#f3f2f1;border-radius:3px;"></div>
<svg class="r" style="left:1711.3px;top:1052.4px;" width="19" height="19" viewBox="0 0 19 19" fill="none"><path d="M9.5 0 A9.5 9.5 0 0 0 8.02 18.88 V12.25 H5.6 V9.5 H8.02 V7.4 C8.02 5.02 9.44 3.71 11.6 3.71 C12.64 3.71 13.73 3.9 13.73 3.9 V6.23 H12.53 C11.35 6.23 10.98 6.97 10.98 7.72 V9.5 H13.62 L13.2 12.25 H10.98 V18.88 A9.5 9.5 0 0 0 9.5 0 Z" fill="#1e4e9d"/></svg>
<div class="t" style="left:1738.80px;top:1051px;font-size:18px;line-height:26px;-webkit-text-stroke:0.25px #7a7876;letter-spacing:0.184px;color:#7a7876;">Pizza day</div>
<div class="r" style="left:1955.8px;top:1011.2px;width:223.6px;height:34.2px;background:#e5effc;border-radius:3px;"></div>
<svg class="r" style="left:1963.6px;top:1018.9px;" width="19" height="19" viewBox="0 0 19 19" fill="none"><path d="M18.6 3.6 C17.9 3.9 17.2 4.1 16.4 4.2 C17.2 3.7 17.8 3 18.1 2.1 C17.4 2.5 16.6 2.8 15.7 3 C15 2.3 14 1.8 12.9 1.8 C10.8 1.8 9.1 3.5 9.1 5.6 C9.1 5.9 9.1 6.2 9.2 6.5 C6 6.3 3.2 4.8 1.4 2.5 C1 3.1 0.9 3.7 0.9 4.4 C0.9 5.7 1.5 6.9 2.6 7.6 C1.9 7.6 1.3 7.4 0.8 7.1 C0.8 9 2.1 10.5 3.9 10.9 C3.5 11 3.2 11 2.8 11 C2.6 11 2.3 11 2.1 10.9 C2.6 12.4 4 13.5 5.7 13.6 C4.4 14.6 2.7 15.2 0.9 15.2 C0.6 15.2 0.3 15.2 0 15.1 C1.7 16.2 3.7 16.8 5.9 16.8 C12.9 16.8 16.7 11 16.7 6 C16.7 5.8 16.7 5.7 16.7 5.5 C17.4 5 18.1 4.3 18.6 3.6 Z" fill="#2a9df0"/></svg>
<div class="t" style="left:1991.10px;top:1017px;font-size:18px;line-height:26px;-webkit-text-stroke:0.50px #383736;letter-spacing:0.715px;color:#383736;">Better with pizza</div>
<div class="r" style="left:1955.8px;top:1049.45px;width:223.6px;height:34.2px;background:#e5effc;border-radius:3px;"></div>
<svg class="r" style="left:1963.6px;top:1056.95px;" width="19" height="19" viewBox="0 0 19 19" fill="none"><rect x="0.9" y="0.9" width="17.2" height="17.2" rx="4.6" stroke="#a8705a" stroke-width="1.6"/><circle cx="9.5" cy="9.5" r="4.2" stroke="#a8705a" stroke-width="1.6"/><circle cx="14.3" cy="4.6" r="1" fill="#a8705a"/></svg>
<div class="t" style="left:1991.10px;top:1055px;font-size:18px;line-height:26px;-webkit-text-stroke:0.50px #383736;letter-spacing:0.715px;color:#383736;">Better with pizza</div>
<div class="r" style="left:1955.8px;top:1087.7px;width:223.6px;height:34.2px;background:#e5effc;border-radius:3px;"></div>
<svg class="r" style="left:1963.6px;top:1095.2px;" width="19" height="19" viewBox="0 0 19 19" fill="none"><path d="M9.5 0 A9.5 9.5 0 0 0 8.02 18.88 V12.25 H5.6 V9.5 H8.02 V7.4 C8.02 5.02 9.44 3.71 11.6 3.71 C12.64 3.71 13.73 3.9 13.73 3.9 V6.23 H12.53 C11.35 6.23 10.98 6.97 10.98 7.72 V9.5 H13.62 L13.2 12.25 H10.98 V18.88 A9.5 9.5 0 0 0 9.5 0 Z" fill="#1e4e9d"/></svg>
<div class="t" style="left:1991.10px;top:1093px;font-size:18px;line-height:26px;-webkit-text-stroke:0.50px #383736;letter-spacing:0.715px;color:#383736;">Better with pizza</div>
<div class="r" style="left:1185.8px;top:1132.8px;width:223.6px;height:34.2px;background:#e5effc;border-radius:3px;"></div>
<svg class="r" style="left:1193.6px;top:1140.3px;" width="19" height="19" viewBox="0 0 19 19" fill="none"><path d="M9.5 0 A9.5 9.5 0 0 0 8.02 18.88 V12.25 H5.6 V9.5 H8.02 V7.4 C8.02 5.02 9.44 3.71 11.6 3.71 C12.64 3.71 13.73 3.9 13.73 3.9 V6.23 H12.53 C11.35 6.23 10.98 6.97 10.98 7.72 V9.5 H13.62 L13.2 12.25 H10.98 V18.88 A9.5 9.5 0 0 0 9.5 0 Z" fill="#1e4e9d"/></svg>
<div class="t" style="left:1221.10px;top:1139px;font-size:18px;line-height:26px;-webkit-text-stroke:0.50px #383736;letter-spacing:0.443px;color:#383736;">Pizza time</div>
<div class="r" style="left:1185.8px;top:1171.4px;width:223.6px;height:5px;background:#e5effc;border-radius:3px 3px 0 0;"></div>
<div class="r" style="left:1851.3px;top:1216.7px;width:142.7px;height:58.8px;background:#2266e3;border-radius:3px;"></div>
<div class="t" style="left:1891.50px;top:1228px;font-size:27.5px;line-height:37px;-webkit-text-stroke:0.77px #fff;letter-spacing:-0.917px;color:#fff;">Done</div>
<div class="r" style="left:2010px;top:1216.7px;width:156px;height:58.8px;background:#fff;box-sizing:border-box;border:2px solid #8a8886;border-radius:3px;"></div>
<div class="t" style="left:2048.50px;top:1228px;font-size:27.5px;line-height:37px;-webkit-text-stroke:0.77px #201f1e;letter-spacing:-1.322px;color:#201f1e;">Cancel</div>
</div>
</body></html>
